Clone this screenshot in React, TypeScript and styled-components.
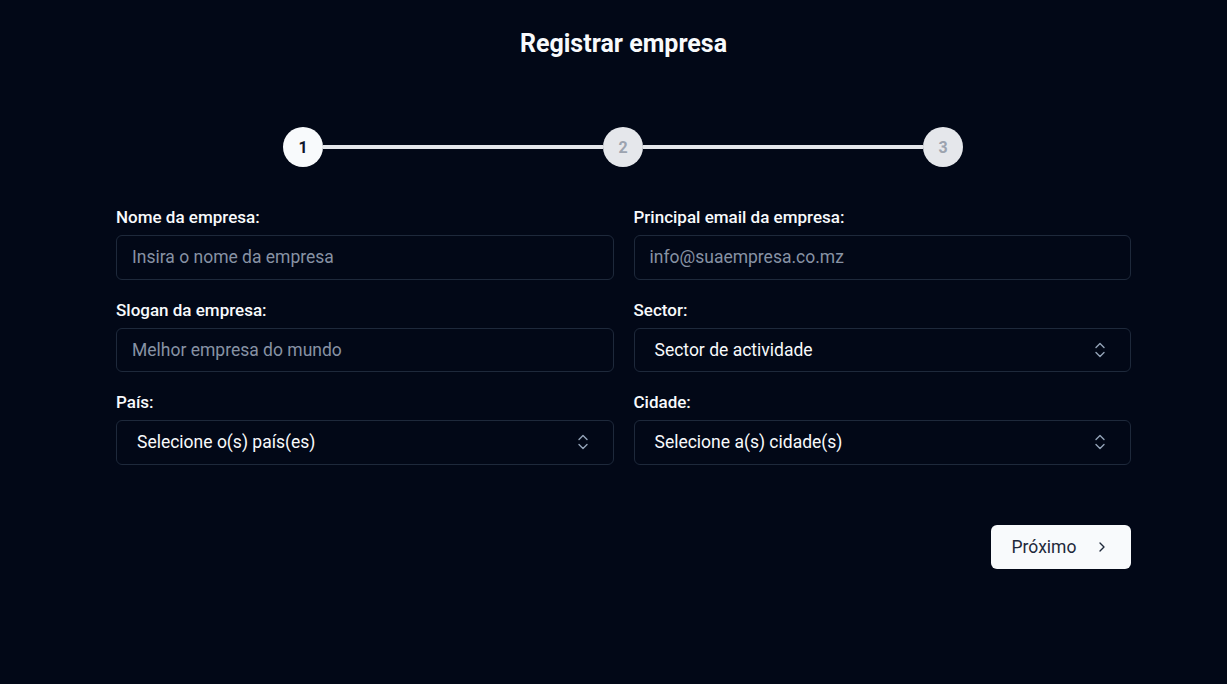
import React from 'react';
import styled, { createGlobalStyle } from 'styled-components';

const GlobalStyle = createGlobalStyle`
  * {
    box-sizing: border-box;
  }
  body {
    margin: 0;
    background: #020817;
    font-family: Roboto, 'Liberation Sans', sans-serif;
    color: #f8fafc;
  }
`;

const steps = [1, 2, 3];

const fields = [
  { label: 'Nome da empresa:', placeholder: 'Insira o nome da empresa' },
  { label: 'Principal email da empresa:', placeholder: 'info@suaempresa.co.mz' },
  { label: 'Slogan da empresa:', placeholder: 'Melhor empresa do mundo' },
  { label: 'Sector:', select: 'Sector de actividade' },
  { label: 'País:', select: 'Selecione o(s) país(es)' },
  { label: 'Cidade:', select: 'Selecione a(s) cidade(s)' },
];

const SortIcon = () => (
  <svg width="12" height="18" viewBox="0 0 12 18" fill="none">
    <path
      d="M2 6.5 6 2.5l4 4M2 11.5l4 4 4-4"
      stroke="currentColor"
      strokeWidth="1.4"
      strokeLinecap="round"
      strokeLinejoin="round"
    />
  </svg>
);

const ChevronRight = () => (
  <svg width="16" height="16" viewBox="0 0 24 24" fill="none">
    <path
      d="m9 18 6-6-6-6"
      stroke="currentColor"
      strokeWidth="2"
      strokeLinecap="round"
      strokeLinejoin="round"
    />
  </svg>
);

const App = () => {
  return (
    <Page>
      <GlobalStyle />
      <Title>Registrar empresa</Title>
      <Stepper>
        {steps.map((step, i) => (
          <React.Fragment key={step}>
            {i > 0 && <StepLine />}
            <StepCircle active={step === 1}>{step}</StepCircle>
          </React.Fragment>
        ))}
      </Stepper>
      <Form>
        <FieldGrid>
          {fields.map((field) => (
            <Field key={field.label}>
              <Label>{field.label}</Label>
              {field.select ? (
                <SelectBox type="button">
                  <span>{field.select}</span>
                  <IconWrap>
                    <SortIcon />
                  </IconWrap>
                </SelectBox>
              ) : (
                <Input placeholder={field.placeholder} />
              )}
            </Field>
          ))}
        </FieldGrid>
        <Footer>
          <NextButton type="button">
            Próximo
            <ChevronRight />
          </NextButton>
        </Footer>
      </Form>
    </Page>
  );
};

const Page = styled.div`
  display: flex;
  flex-direction: column;
  align-items: center;
  padding: 28px 0 0 20px;
  min-height: 684px;
`;

const Title = styled.h1`
  margin: 0;
  font-size: 25px;
  line-height: 32px;
  font-weight: 700;
  color: #f8fafc;
`;

const Stepper = styled.div`
  margin-top: 67px;
  margin-left: -1px;
  width: 680px;
  display: flex;
  align-items: center;
`;

const StepCircle = styled.div<{ active: boolean }>`
  width: 40px;
  height: 40px;
  border-radius: 50%;
  flex-shrink: 0;
  display: flex;
  align-items: center;
  justify-content: center;
  font-size: 16px;
  font-weight: 700;
  background: ${({ active }) => (active ? '#f8fafc' : '#e5e7eb')};
  color: ${({ active }) => (active ? '#0f172a' : '#9ca3af')};
`;

const StepLine = styled.div`
  flex: 1;
  height: 4px;
  background: #e5e7eb;
`;

const Form = styled.div`
  margin-top: 40px;
  width: 1015px;
`;

const FieldGrid = styled.div`
  display: grid;
  grid-template-columns: 1fr 1fr;
  column-gap: 20px;
  row-gap: 20px;
`;

const Field = styled.div`
  display: flex;
  flex-direction: column;
  gap: 8px;
`;

const Label = styled.label`
  font-size: 17px;
  line-height: 20px;
  font-weight: 500;
  color: #f8fafc;
`;

const Input = styled.input`
  height: 44.5px;
  width: 100%;
  border: 1px solid #1e293b;
  border-radius: 6px;
  background: transparent;
  padding: 0 15px;
  font-family: Roboto, 'Liberation Sans', sans-serif;
  font-size: 17.5px;
  color: #f8fafc;
  outline: none;

  &::placeholder {
    color: #8792a4;
  }
`;

const SelectBox = styled.button`
  height: 44.5px;
  width: 100%;
  border: 1px solid #1e293b;
  border-radius: 6px;
  background: transparent;
  padding: 0 24px 0 20px;
  display: flex;
  align-items: center;
  justify-content: space-between;
  font-family: Roboto, 'Liberation Sans', sans-serif;
  font-size: 17.5px;
  font-weight: 400;
  color: #f8fafc;
  cursor: pointer;
`;

const IconWrap = styled.span`
  display: flex;
  color: #94a3b8;
`;

const Footer = styled.div`
  margin-top: 60px;
  display: flex;
  justify-content: flex-end;
`;

const NextButton = styled.button`
  width: 140px;
  height: 44.5px;
  border: none;
  border-radius: 6px;
  background: #f8fafc;
  color: #1e293b;
  display: flex;
  align-items: center;
  justify-content: center;
  gap: 18px;
  font-family: Roboto, 'Liberation Sans', sans-serif;
  font-size: 17.5px;
  font-weight: 400;
  cursor: pointer;
`;

export default App;
